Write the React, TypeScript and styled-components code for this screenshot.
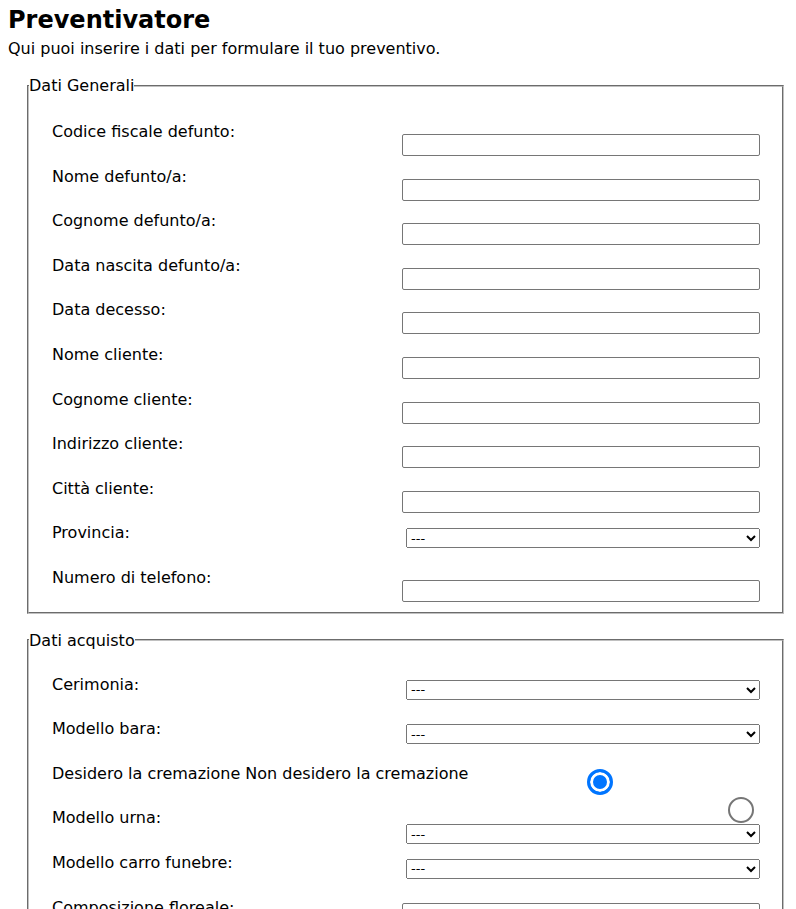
import styled, { createGlobalStyle } from "styled-components";

const GlobalStyle = createGlobalStyle`
  body {
    margin: 6px 8px 8px;
    font-family: "DejaVu Sans", Verdana, sans-serif;
    font-size: 16px;
    color: #000;
    background: #fff;
  }
`;

const Title = styled.h2`
  margin: 0;
  font-size: 24px;
  font-weight: bold;
`;

const Intro = styled.p`
  margin: 5px 0 0;
`;

const Fieldset = styled.fieldset<{ $top?: number }>`
  margin: ${(p) => p.$top ?? 18}px 4px 0 19px;
  padding: 0;
  border: 2px groove #c0c0c0;
`;

const Legend = styled.legend`
  padding: 0;
`;

const Fields = styled.div<{ $top?: number }>`
  padding: ${(p) => p.$top ?? 26}px 22px 0 23px;
`;

const Row = styled.div`
  display: grid;
  grid-template-columns: minmax(0, 1fr) 358px;
  height: 44.6px;
  align-items: start;
`;

const Label = styled.label`
  padding-top: 2px;
  line-height: 18.6px;
  white-space: nowrap;
`;

const TextInput = styled.input<{ $offset?: number }>`
  box-sizing: border-box;
  width: 358px;
  height: 22px;
  margin: ${(p) => p.$offset ?? 13}px 0 0;
  border: 1px solid #767676;
  border-radius: 2px;
  font: 13px "DejaVu Sans", sans-serif;
`;

const Select = styled.select<{ $offset?: number }>`
  box-sizing: border-box;
  width: 354px;
  height: 20px;
  margin: ${(p) => p.$offset ?? 6}px 0 0 4px;
  font: 13px "DejaVu Sans", sans-serif;
`;

const RadioCol = styled.div`
  display: flex;
  flex-direction: column;
  height: 20px;
  margin-top: 6px;
`;

const Radio = styled.input<{ $left: number }>`
  appearance: none;
  flex-shrink: 0;
  box-sizing: border-box;
  width: 26px;
  height: 26px;
  margin: 0 0 2px ${(p) => p.$left}px;
  border: 2px solid #767676;
  border-radius: 50%;
  background: #fff;

  &:checked {
    border: 3px solid #0075ff;
    background: #0075ff;
    box-shadow: inset 0 0 0 3px #fff;
  }
`;

type Field = { label: string; kind: "text" | "select"; offset?: number };

const generali: Field[] = [
  { label: "Codice fiscale defunto:", kind: "text" },
  { label: "Nome defunto/a:", kind: "text" },
  { label: "Cognome defunto/a:", kind: "text" },
  { label: "Data nascita defunto/a:", kind: "text" },
  { label: "Data decesso:", kind: "text" },
  { label: "Nome cliente:", kind: "text" },
  { label: "Cognome cliente:", kind: "text" },
  { label: "Indirizzo cliente:", kind: "text" },
  { label: "Città cliente:", kind: "text" },
  { label: "Provincia:", kind: "select" },
  { label: "Numero di telefono:", kind: "text" },
];

function FieldRow({ field }: { field: Field }) {
  return (
    <Row>
      <Label>{field.label}</Label>
      {field.kind === "text" ? (
        <TextInput type="text" $offset={field.offset} />
      ) : (
        <Select $offset={field.offset} defaultValue="">
          <option value="">---</option>
        </Select>
      )}
    </Row>
  );
}

export default function App() {
  return (
    <>
      <GlobalStyle />
      <Title>Preventivatore</Title>
      <Intro>Qui puoi inserire i dati per formulare il tuo preventivo.</Intro>
      <Fieldset>
        <Legend>Dati Generali</Legend>
        <Fields>
          {generali.map((f) => (
            <FieldRow key={f.label} field={f} />
          ))}
        </Fields>
      </Fieldset>
      <Fieldset $top={17}>
        <Legend>Dati acquisto</Legend>
        <Fields $top={24}>
          <FieldRow field={{ label: "Cerimonia:", kind: "select" }} />
          <FieldRow field={{ label: "Modello bara:", kind: "select" }} />
          <Row>
            <Label>Desidero la cremazione Non desidero la cremazione</Label>
            <RadioCol>
              <Radio type="radio" name="cremazione" defaultChecked $left={185} />
              <Radio type="radio" name="cremazione" $left={326} />
            </RadioCol>
          </Row>
          <FieldRow field={{ label: "Modello urna:", kind: "select", offset: 17 }} />
          <FieldRow field={{ label: "Modello carro funebre:", kind: "select", offset: 7 }} />
          <FieldRow field={{ label: "Composizione floreale:", kind: "text", offset: 6 }} />
          <FieldRow field={{ label: "Note:", kind: "text" }} />
        </Fields>
      </Fieldset>
    </>
  );
}
